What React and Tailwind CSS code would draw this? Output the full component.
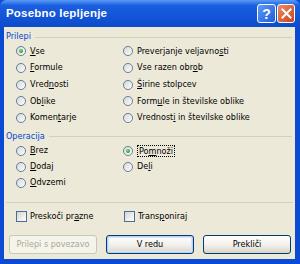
import React from "react";

const FONT = { fontFamily: '"DejaVu Sans Condensed", "DejaVu Sans", Tahoma, sans-serif' };

// label with an underlined access key at index k
function Label({ text, k }) {
  if (k == null) return <span>{text}</span>;
  return (
    <span>
      {text.slice(0, k)}
      <span className="underline underline-offset-[1px]">{text[k]}</span>
      {text.slice(k + 1)}
    </span>
  );
}

function Radio({ checked }) {
  return (
    <svg width="10" height="10" viewBox="0 0 13 13" className="shrink-0">
      <defs>
        <linearGradient id="radioFill" x1="0" y1="0" x2="1" y2="1">
          <stop offset="0" stopColor="#D8D5CA" />
          <stop offset="1" stopColor="#FFFFFF" />
        </linearGradient>
        <radialGradient id="radioDot" cx="0.4" cy="0.35" r="0.7">
          <stop offset="0" stopColor="#7EDB7E" />
          <stop offset="1" stopColor="#1E9A1E" />
        </radialGradient>
      </defs>
      <circle cx="6.5" cy="6.5" r="5.9" fill="url(#radioFill)" stroke="#46709A" strokeWidth="1.1" />
      {checked && <circle cx="6.5" cy="6.5" r="2.6" fill="url(#radioDot)" />}
    </svg>
  );
}

function RadioRow({ text, k, checked, focus, h }) {
  return (
    <div className={`flex items-center gap-[4px] ${h}`}>
      <Radio checked={checked} />
      <span className={focus ? "border border-dotted border-black px-[1px] leading-[10px]" : ""}>
        <Label text={text} k={k} />
      </span>
    </div>
  );
}

function GroupLabel({ children }) {
  return (
    <div className="flex items-center h-[12px] pl-[2px] pr-[3px] gap-[4px]">
      <span className="text-[#0046D5]">{children}</span>
      <div className="flex-1 h-px bg-[#D0D0BF]" />
    </div>
  );
}

function Check({ text, k }) {
  return (
    <div className="flex items-center gap-[3px]">
      <div className="w-[11px] h-[11px] border border-[#46709A] bg-gradient-to-br from-[#D8D5CA] to-white" />
      <Label text={text} k={k} />
    </div>
  );
}

const prilepiLeft = [
  ["Vse", 0, true],
  ["Formule", 0],
  ["Vrednosti", 4],
  ["Oblike", 2],
  ["Komentarje", 5],
];
const prilepiRight = [
  ["Preverjanje veljavnosti", 20],
  ["Vse razen obrob", 13],
  ["Širine stolpcev", 0],
  ["Formule in številske oblike", 4],
  ["Vrednosti in številske oblike", 8],
];

export default function App() {
  return (
    <div className="w-[300px] h-[264px] flex flex-col bg-[#0B4BD4] text-[9px] text-black" style={FONT}>
      {/* title bar */}
      <div className="h-[27px] shrink-0 flex items-center pl-[6px] pr-[5px] bg-gradient-to-b from-[#5A9AF5] via-[#1A5FE0] via-20% to-[#0B4BCC] rounded-t-[6px]">
        <span className="text-white font-bold text-[11.5px] tracking-[0.2px] flex-1" style={{ fontFamily: '"Liberation Sans", Arial, sans-serif' }}>
          Posebno lepljenje
        </span>
        <div className="flex gap-[1px]">
          <div className="w-[19px] h-[19px] rounded-[3px] border border-white bg-gradient-to-br from-[#5E9BF7] to-[#1D5CDD] flex items-center justify-center text-white font-bold text-[14px] leading-none" style={{ fontFamily: '"Liberation Sans", Arial, sans-serif' }}>
            ?
          </div>
          <div className="w-[18px] h-[19px] rounded-[3px] border border-white bg-gradient-to-br from-[#EE8A62] to-[#C8421A] flex items-center justify-center">
            <svg width="11" height="11" viewBox="0 0 11 11">
              <path d="M1.5 1.5 L9.5 9.5 M9.5 1.5 L1.5 9.5" stroke="white" strokeWidth="2" strokeLinecap="square" />
            </svg>
          </div>
        </div>
      </div>

      {/* body */}
      <div className="flex-1 mx-[4px] mr-[5px] mb-[5px] bg-[#ECE9D8] pt-[4px] flex flex-col">
        <GroupLabel>Prilepi</GroupLabel>
        <div className="grid grid-cols-[107px_1fr] pl-[12px]">
          <div className="flex flex-col">
            {prilepiLeft.map(([t, k, c]) => (
              <RadioRow key={t} text={t} k={k} checked={c} h="h-[16.7px]" />
            ))}
          </div>
          <div className="flex flex-col">
            {prilepiRight.map(([t, k]) => (
              <RadioRow key={t} text={t} k={k} h="h-[16.7px]" />
            ))}
          </div>
        </div>

        <div className="mt-[4.5px]">
          <GroupLabel>Operacija</GroupLabel>
        </div>
        <div className="grid grid-cols-[107px_1fr] pl-[12px]">
          <div className="flex flex-col">
            <RadioRow text="Brez" k={0} h="h-[16px]" />
            <RadioRow text="Dodaj" k={0} h="h-[16px]" />
            <RadioRow text="Odvzemi" k={0} h="h-[16px]" />
          </div>
          <div className="flex flex-col">
            <RadioRow text="Pomnoži" k={2} checked focus h="h-[16px]" />
            <RadioRow text="Deli" k={2} h="h-[16px]" />
          </div>
        </div>

        <div className="mt-[11.5px] mx-[2px] h-px bg-[#D0D0BF]" />

        <div className="mt-[5px] h-[16px] grid grid-cols-[108px_1fr] pl-[12px] items-center">
          <Check text="Preskoči prazne" k={11} />
          <Check text="Transponiraj" k={5} />
        </div>

        <div className="mt-[11px] flex gap-[9px] pl-[5px]">
          <div className="w-[88px] h-[19px] rounded-[3px] border border-[#C9C7BA] bg-[#F5F4EA] text-[#ACA899] flex items-center justify-center">
            Prilepi s povezavo
          </div>
          <div className="w-[88px] h-[19px] rounded-[3px] border border-[#003C74] bg-gradient-to-b from-white via-[#F2F1EC] to-[#D9D4C8] flex items-center justify-center shadow-[inset_0_0_0_1px_#B8D0F5,inset_0_0_0_2px_#D6E4FA]">
            V redu
          </div>
          <div className="w-[88px] h-[19px] rounded-[3px] border border-[#003C74] bg-gradient-to-b from-white via-[#F2F1EC] to-[#D9D4C8] flex items-center justify-center">
            Prekliči
          </div>
        </div>
      </div>
    </div>
  );
}
